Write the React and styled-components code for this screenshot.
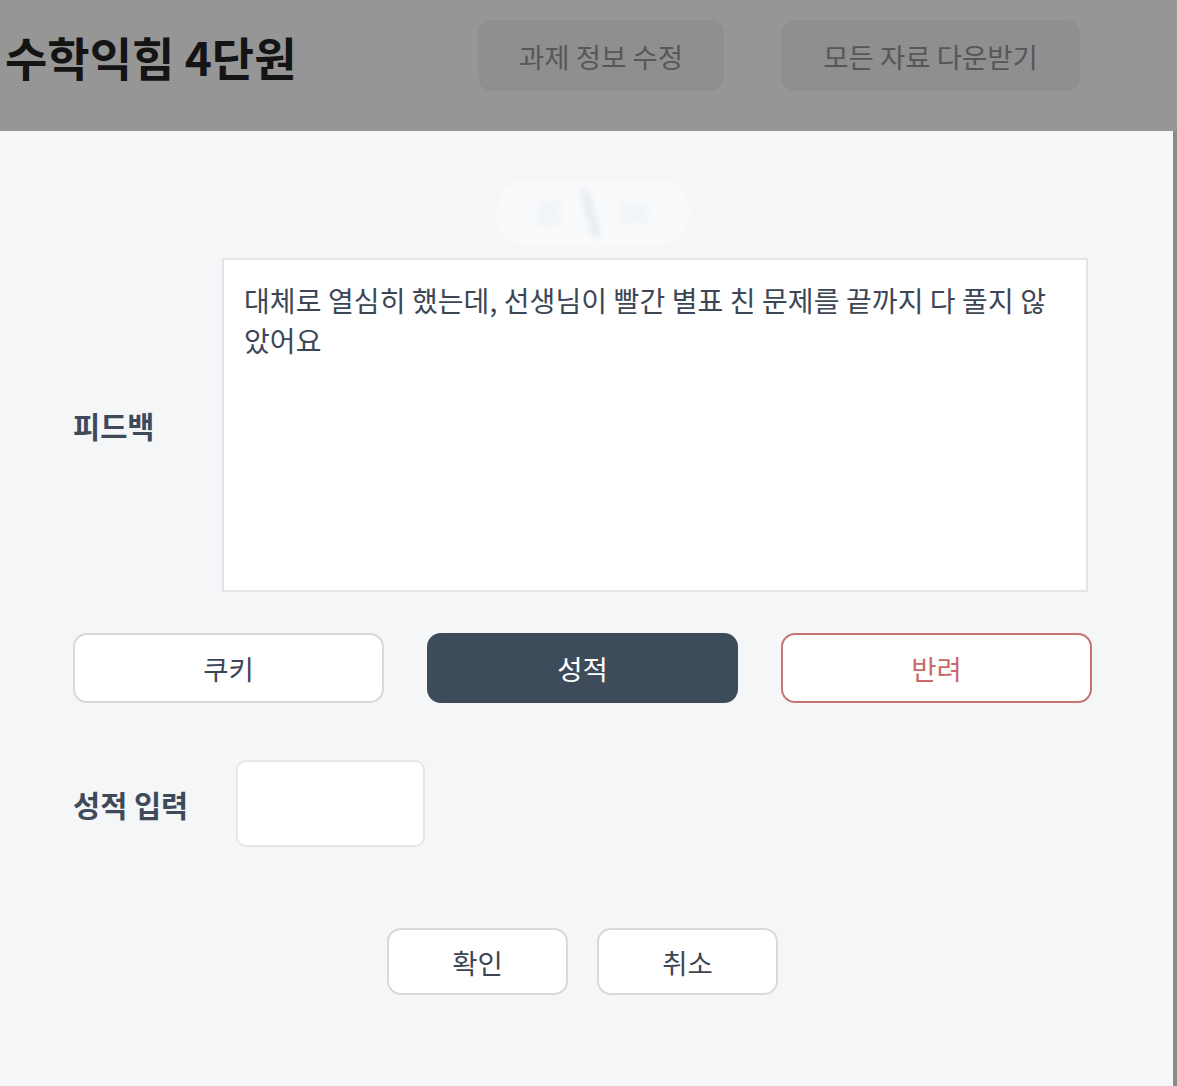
import styled, { createGlobalStyle } from "styled-components"

const GlobalStyle = createGlobalStyle`
  html, body {
    margin: 0;
    padding: 0;
  }

  body {
    background: #8b8b8b;
    font-family: "Noto Sans CJK KR", "Noto Sans", sans-serif;
  }

  * {
    box-sizing: border-box;
  }
`

const Page = styled.div`
  display: flex;
  flex-direction: column;
  width: 1177px;
  height: 1086px;
  overflow: hidden;
`

const Header = styled.header`
  display: flex;
  align-items: center;
  justify-content: space-between;
  height: 131px;
  padding: 0 97px 20px 5px;
  background: #969696;
  flex-shrink: 0;
`

const Title = styled.h1`
  margin: 0;
  font-size: 46px;
  font-weight: 700;
  color: #141414;
`

const HeaderActions = styled.div`
  display: flex;
  gap: 57px;
`

const HeaderButton = styled.button`
  height: 71px;
  width: ${(p) => p.$width}px;
  border: none;
  border-radius: 14px;
  background: #8f8f8f;
  color: #575757;
  font-family: inherit;
  font-size: 27.5px;
  font-weight: 400;
`

const Modal = styled.section`
  flex: 1;
  width: 1173px;
  background: #f4f6f8;
  padding: 0 81px 0 73px;
`

const Ghost = styled.div`
  width: 195px;
  height: 66px;
  margin: 49px 0 12px 422px;
  border-radius: 32px;
  background: rgba(255, 255, 255, 0.45);
  filter: blur(3px);
  display: flex;
  align-items: center;
  justify-content: center;
  gap: 24px;
`

const GhostMark = styled.span`
  width: ${(p) => p.$w}px;
  height: ${(p) => p.$h}px;
  background: ${(p) => p.$c};
  border-radius: 4px;
  transform: rotate(${(p) => p.$r || 0}deg);
`

const FieldRow = styled.div`
  display: flex;
  align-items: center;
`

const Label = styled.label`
  width: ${(p) => p.$width}px;
  flex-shrink: 0;
  font-size: 29.5px;
  font-weight: 700;
  color: #3e4a5a;
`

const Feedback = styled.textarea`
  width: 866px;
  height: 334px;
  padding: 20px 24px 20px 20px;
  border: 2px solid #e2e4e7;
  background: #fff;
  resize: none;
  outline: none;
  font-family: inherit;
  font-size: 28px;
  letter-spacing: 0.1px;
  line-height: 40px;
  word-break: break-all;
  color: #3d4655;
`

const ActionRow = styled.div`
  display: grid;
  grid-template-columns: repeat(3, 311px);
  gap: 43px;
  margin-top: 41px;
`

const tones = {
  plain: { bg: "#fff", border: "#d9d9d9", color: "#3d4655" },
  dark: { bg: "#3d4b5b", border: "#3d4b5b", color: "#fff" },
  danger: { bg: "#fff", border: "#c97373", color: "#c96a6a" },
}

const ActionButton = styled.button`
  height: 70px;
  border-radius: 14px;
  border: 2px solid ${(p) => tones[p.$tone].border};
  background: ${(p) => tones[p.$tone].bg};
  color: ${(p) => tones[p.$tone].color};
  font-family: inherit;
  font-size: 27.5px;
  font-weight: 400;
`

const GradeRow = styled(FieldRow)`
  margin-top: 57px;
`

const GradeInput = styled.input`
  width: 189px;
  height: 87px;
  border: 2px solid #e6e7e9;
  border-radius: 10px;
  background: #fff;
  outline: none;
  font-family: inherit;
  font-size: 27px;
  padding: 0 16px;
`

const Footer = styled.div`
  display: flex;
  justify-content: center;
  gap: 29px;
  margin-top: 81px;
`

const FooterButton = styled.button`
  width: 181px;
  height: 67px;
  border-radius: 14px;
  border: 2px solid #d9d9d9;
  background: #fff;
  color: #3d4655;
  font-family: inherit;
  font-size: 27.5px;
`

export default function App() {
  return (
    <Page>
      <GlobalStyle />
      <Header>
        <Title>수학익힘 4단원</Title>
        <HeaderActions>
          <HeaderButton $width={246}>과제 정보 수정</HeaderButton>
          <HeaderButton $width={299}>모든 자료 다운받기</HeaderButton>
        </HeaderActions>
      </Header>
      <Modal>
        <Ghost>
          <GhostMark $w={26} $h={28} $c="rgba(240,242,245,0.7)" />
          <GhostMark $w={9} $h={50} $c="rgba(226,231,238,0.8)" $r={-15} />
          <GhostMark $w={30} $h={24} $c="rgba(240,242,245,0.7)" />
        </Ghost>
        <FieldRow>
          <Label $width={149}>피드백</Label>
          <Feedback defaultValue="대체로 열심히 했는데, 선생님이 빨간 별표 친 문제를 끝까지 다 풀지 않았어요" />
        </FieldRow>
        <ActionRow>
          <ActionButton $tone="plain">쿠키</ActionButton>
          <ActionButton $tone="dark">성적</ActionButton>
          <ActionButton $tone="danger">반려</ActionButton>
        </ActionRow>
        <GradeRow>
          <Label $width={163}>성적 입력</Label>
          <GradeInput />
        </GradeRow>
        <Footer>
          <FooterButton>확인</FooterButton>
          <FooterButton>취소</FooterButton>
        </Footer>
      </Modal>
    </Page>
  )
}
